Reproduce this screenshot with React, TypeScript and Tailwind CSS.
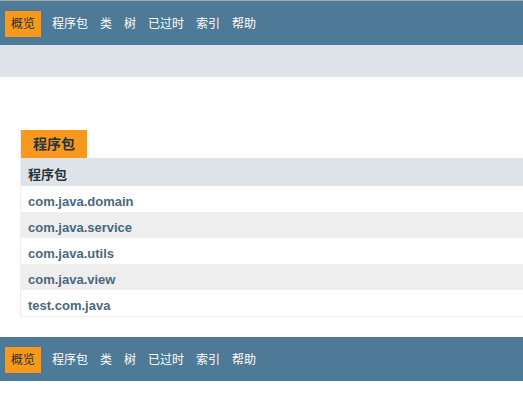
import React from "react";

const items = ["程序包", "类", "树", "已过时", "索引", "帮助"];
const pkgs = ["com.java.domain", "com.java.service", "com.java.utils", "com.java.view", "test.com.java"];
const font = { fontFamily: '"Liberation Sans", Arial, "Noto Sans CJK SC", sans-serif' };

function NavBar() {
  return (
    <div className="h-[44px] bg-[#4D7A97] pt-[10px] flex text-[12px] text-white">
      <div className="ml-[5px] mr-[5px] h-[26px] px-[6px] bg-[#F8981D] text-[#253441] flex items-center">概览</div>
      {items.map((t) => (
        <div key={t} className="h-[26px] px-[6px] flex items-center">{t}</div>
      ))}
    </div>
  );
}

export default function App() {
  return (
    <div className="w-[523px] h-[402px] bg-white overflow-hidden" style={font}>
      <div className="h-px bg-[#a8a8a8]" />
      <NavBar />
      <div className="h-[32px] bg-[#DEE3E9]" />
      <div className="pt-[53px] pl-[20px]">
        <div className="border-l border-b border-[#EEEEEE]">
          <div className="flex">
            <div className="h-[28px] px-[12px] bg-[#F8981D] text-[#253441] font-bold text-[14px] flex items-center">程序包</div>
          </div>
          <div className="h-[28px] bg-[#DEE3E9] pl-[7px] pt-[9px] text-[13px] font-bold text-[#253441] leading-[16px]">程序包</div>
          {pkgs.map((p, i) => (
            <div
              key={p}
              className={`h-[26px] pl-[7px] pt-[8px] text-[13px] font-bold text-[#4A6782] leading-[15px] ${i % 2 === 1 ? "bg-[#EEEEEF]" : "bg-white"}`}
            >
              {p}
            </div>
          ))}
        </div>
      </div>
      <div className="h-[20px]" />
      <NavBar />
    </div>
  );
}
